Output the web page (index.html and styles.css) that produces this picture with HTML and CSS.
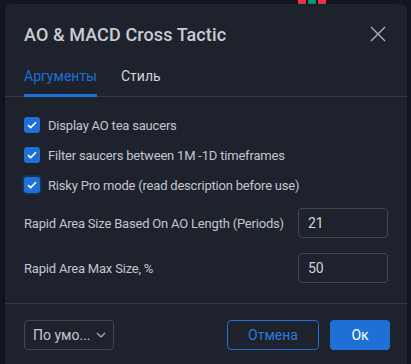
FILE: index.html
```html
<!DOCTYPE html>
<html lang="ru">
<head>
    <meta charset="UTF-8">
    <title>AO &amp; MACD Cross Tactic</title>
    <link rel="stylesheet" href="styles.css">
</head>
<body>
    <div class="chart">
        <div class="candle red" style="left: 298px"></div>
        <div class="candle green" style="left: 308px"></div>
        <div class="candle red" style="left: 318px"></div>
    </div>

    <div class="dialog">
        <div class="header">
            <h1 class="title">AO &amp; MACD Cross Tactic</h1>
            <button class="close" type="button">
                <svg width="16" height="16" viewBox="0 0 16 16"><path d="M1 1L15 15M15 1L1 15" stroke="#b2b5be" stroke-width="1.3" fill="none"/></svg>
            </button>
        </div>

        <div class="tabs">
            <div class="tab active">Аргументы</div>
            <div class="tab">Стиль</div>
        </div>

        <div class="content">
            <label class="check">
                <span class="box"><svg width="10" height="8" viewBox="0 0 10 8"><path d="M1 4.2L3.7 6.6L9 1.2" stroke="#fff" stroke-width="1.6" fill="none"/></svg></span>
                Display AO tea saucers
            </label>
            <label class="check">
                <span class="box"><svg width="10" height="8" viewBox="0 0 10 8"><path d="M1 4.2L3.7 6.6L9 1.2" stroke="#fff" stroke-width="1.6" fill="none"/></svg></span>
                Filter saucers between 1M -1D timeframes
            </label>
            <label class="check focused">
                <span class="box"><svg width="10" height="8" viewBox="0 0 10 8"><path d="M1 4.2L3.7 6.6L9 1.2" stroke="#fff" stroke-width="1.6" fill="none"/></svg></span>
                Risky Pro mode (read description before use)
            </label>

            <div class="field">
                <span>Rapid Area Size Based On AO Length (Periods)</span>
                <div class="input">21</div>
            </div>
            <div class="field">
                <span>Rapid Area Max Size, %</span>
                <div class="input">50</div>
            </div>
        </div>

        <div class="footer">
            <div class="select">
                <span>По умо...</span>
                <svg width="10" height="6" viewBox="0 0 10 6"><path d="M1 1L5 5L9 1" stroke="#b2b5be" stroke-width="1.2" fill="none"/></svg>
            </div>
            <div class="buttons">
                <button class="btn cancel" type="button">Отмена</button>
                <button class="btn ok" type="button">Ок</button>
            </div>
        </div>
    </div>
</body>
</html>
```

FILE: styles.css
```css
body {
    margin: 0;
    background-color: #131722;
    font-family: Roboto, "Noto Sans", sans-serif;
    overflow: hidden;
    height: 364px;
    position: relative;
    white-space: nowrap;
}
.chart {
    position: absolute;
    left: 0;
    top: 0;
    width: 411px;
    height: 364px;
}
.candle {
    position: absolute;
    top: 0;
    width: 8px;
    height: 4px;
}
.red {
    background-color: #f23645;
}
.green {
    background-color: #089981;
}
.dialog {
    position: relative;
    margin: 4px 0 0 5px;
    width: 402px;
    height: 370px;
    background-color: #1e222d;
    border-radius: 6px;
    box-shadow: 0 2px 6px rgba(0, 0, 0, 0.4);
}
.header {
    display: flex;
    justify-content: space-between;
    align-items: center;
    padding: 14px 21px 0 19px;
    height: 32px;
}
.title {
    margin: 0;
    font-size: 18px;
    font-weight: 500;
    letter-spacing: 0.1px;
    color: #c9ccd3;
}
.close {
    background: none;
    border: none;
    padding: 0;
    width: 16px;
    height: 16px;
}
.tabs {
    display: flex;
    gap: 24px;
    padding: 12px 19px 0;
    border-bottom: 1px solid #363a45;
}
.tab {
    font-size: 14px;
    color: #d1d4dc;
    padding: 6px 0 10px;
    border-bottom: 3px solid transparent;
    margin-bottom: -1px;
}
.tab.active {
    color: #1e70d6;
    border-bottom-color: #1e70d6;
}
.content {
    padding: 20px 19px 20px;
    border-bottom: 1px solid #363a45;
}
.check {
    display: flex;
    align-items: center;
    gap: 8px;
    font-size: 13px;
    letter-spacing: -0.2px;
    color: #c3c6ce;
    height: 16px;
    margin-bottom: 14px;
}
.box {
    width: 16px;
    height: 16px;
    border-radius: 3px;
    background-color: #1e70d6;
    display: flex;
    align-items: center;
    justify-content: center;
}
.focused .box {
    box-shadow: 0 0 0 2px #1b3253;
}
.field {
    display: flex;
    justify-content: space-between;
    align-items: center;
    font-size: 13px;
    letter-spacing: -0.2px;
    color: #c3c6ce;
    margin-top: 15px;
}
.input {
    width: 70px;
    height: 28px;
    line-height: 28px;
    padding: 0 9px;
    border: 1px solid #434651;
    border-radius: 4px;
    color: #d1d4dc;
    font-size: 14px;
    letter-spacing: 0;
}
.footer {
    display: flex;
    justify-content: space-between;
    align-items: center;
    padding: 16px 17px 0 19px;
}
.select {
    display: flex;
    align-items: center;
    justify-content: space-between;
    width: 73px;
    height: 28px;
    padding: 0 7px 0 8px;
    border: 1px solid #434651;
    border-radius: 4px;
    color: #c3c6ce;
    font-size: 14px;
}
.buttons {
    display: flex;
    gap: 11px;
}
.btn {
    font-family: inherit;
    font-size: 14px;
    height: 30px;
    border-radius: 4px;
    cursor: pointer;
}
.cancel {
    width: 92px;
    background: none;
    border: 1px solid #1e70d6;
    color: #2a7ad8;
}
.ok {
    width: 60px;
    background-color: #1e70d6;
    border: none;
    color: #fff;
}
```
